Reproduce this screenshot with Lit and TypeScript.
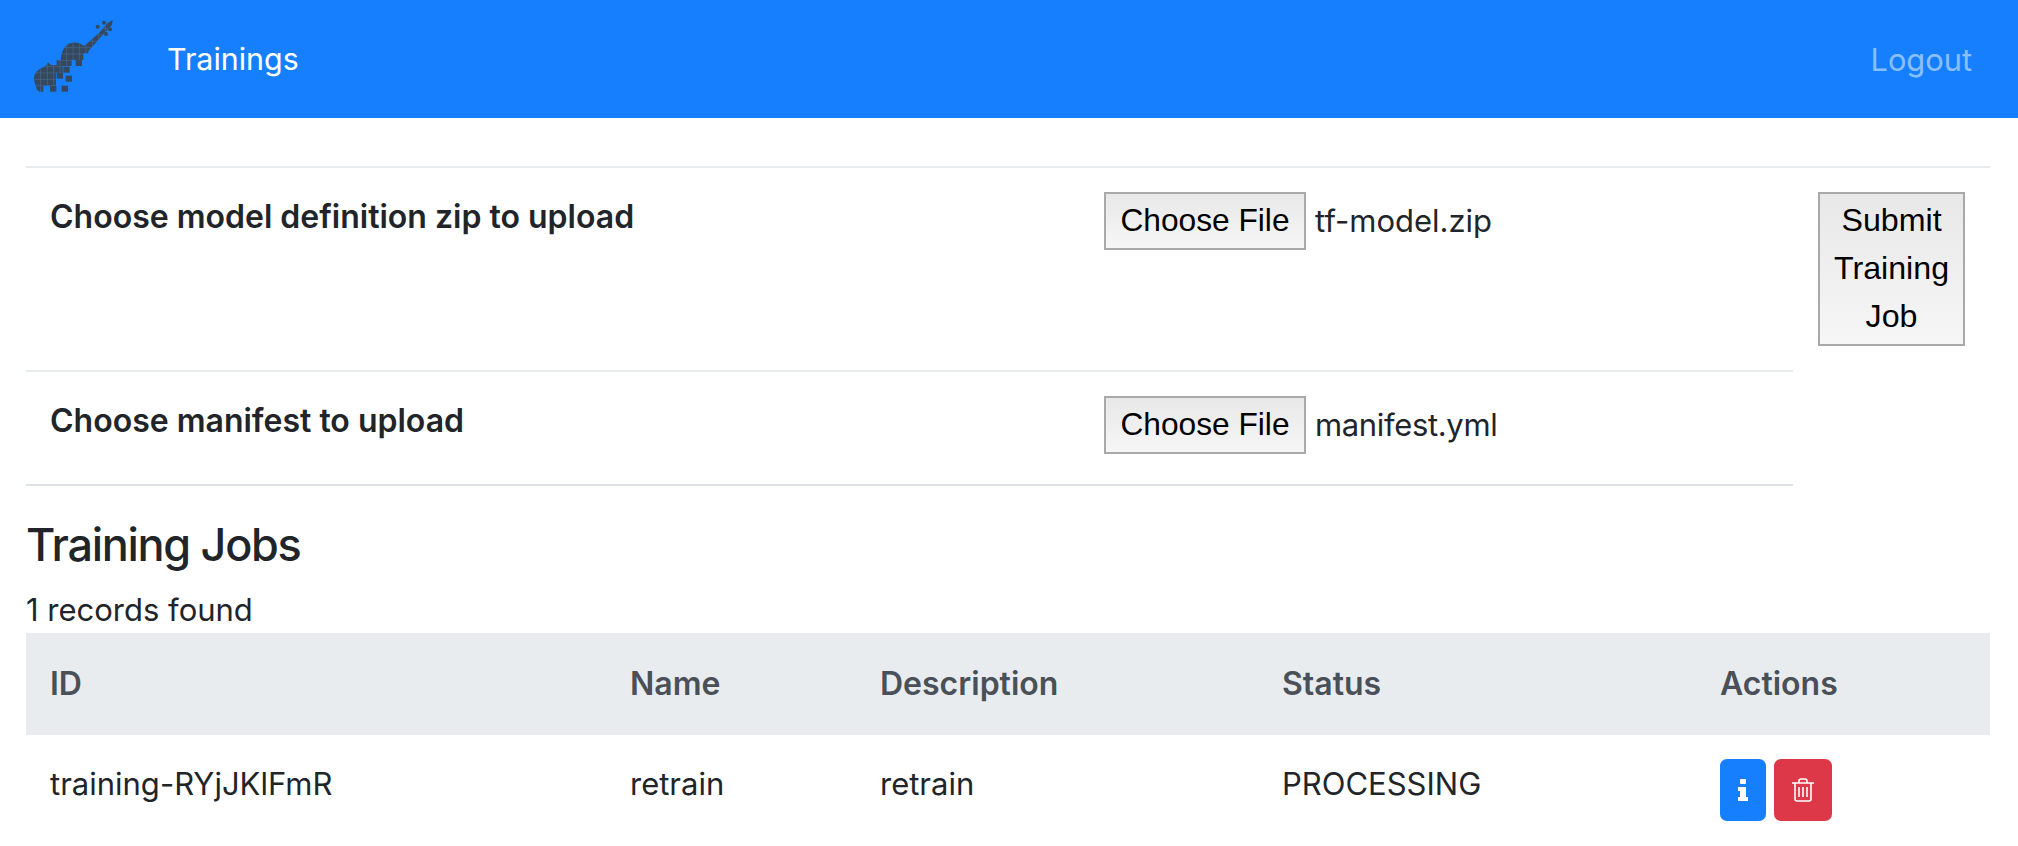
import { LitElement, html, svg, css } from "lit";
import { customElement } from "lit/decorators.js";

const looseSquares: [number, number][] = [
  [167, 150],
  [130, 170],
  [110, 188],
  [137, 197],
  [125, 227],
  [90, 227],
];

const pegs: [number, number][] = [
  [233, 50],
  [252, 38],
  [270, 58],
  [258, 72],
];

const gridX = [62, 82, 101, 120, 140, 159, 178, 198, 217, 236, 256];
const gridY = [55, 75, 94, 113, 132, 151, 170, 189, 208, 227];

const violinPath =
  "M42 205C42 190 52 178 78 167L84 157L92 165H110V150H122C124 130 130 108 150 100C165 94 180 98 192 108L238 68L262 40L278 30L276 44L245 78L205 124V130H190V150H155V168H128V188H108V227H70V245H58Q48 240 47 225Q42 215 42 205Z";

@customElement("app-root")
export class AppRoot extends LitElement {
  static styles = css`
    :host {
      display: block;
      font-family: Inter, "Liberation Sans", sans-serif;
      font-size: 31px;
      color: #212529;
      background: #fff;
      height: 846px;
      overflow: hidden;
    }
    .navbar {
      display: flex;
      align-items: center;
      height: 118px;
      background: #167ffe;
      padding: 0 46px 0 20px;
    }
    .logo {
      width: 110px;
      height: 90px;
      margin-right: 37px;
      margin-top: -8px;
    }
    .brand {
      color: #fff;
      font-size: 30.4px;
    }
    .logout {
      margin-left: auto;
      color: rgba(255, 255, 255, 0.5);
      font-size: 30.8px;
    }
    .content {
      padding: 48px 28px 0 26px;
    }
    .uploads {
      display: grid;
      grid-template-columns: 1053px 714px 197px;
      grid-template-rows: 204px 114px;
      border-top: 2px solid #e9ecef;
    }
    .cell {
      padding: 24px 25px 0;
      box-sizing: border-box;
      border-bottom: 2px solid #e9ecef;
    }
    .last {
      border-bottom-color: #dee2e6;
    }
    .label {
      padding: 26px 24px 0;
      font-weight: 600;
      font-size: 32px;
      line-height: 45px;
    }
    .file {
      display: flex;
      align-items: center;
      gap: 9px;
      font-size: 31px;
    }
    .file span {
      margin-bottom: 2px;
    }
    .file .manifest {
      letter-spacing: -0.35px;
    }
    .native {
      font-family: "Liberation Sans", Arial, sans-serif;
      font-size: 31.7px;
      color: #000;
      background: linear-gradient(#e8e8e8, #f6f6f6);
      border: 2px solid #a9a9a9;
      padding: 0 0 2px;
      line-height: 48px;
      box-sizing: border-box;
    }
    .choose {
      width: 202px;
      height: 58px;
    }
    .submit-cell {
      grid-column: 3;
      grid-row: 1 / span 2;
      padding: 24px 25px 0;
    }
    .submit {
      display: block;
      width: 147px;
      height: 154px;
      font-size: 32.2px;
    }
    h2 {
      margin: 32px 0 0;
      font-size: 45px;
      font-weight: 500;
      letter-spacing: -1.3px;
      line-height: 54px;
    }
    .count {
      margin-top: 15px;
      line-height: 46px;
      font-size: 31px;
    }
    table {
      width: 1964px;
      border-collapse: collapse;
      table-layout: fixed;
    }
    th {
      background: #e9ecef;
      color: #495057;
      font-weight: 600;
      text-align: left;
      height: 102px;
      padding: 0 24px 2px;
      box-sizing: border-box;
      font-size: 32px;
    }
    td {
      padding: 24px 24px 0;
      vertical-align: top;
      line-height: 50px;
      font-size: 31px;
    }
    .actions {
      display: flex;
      gap: 8px;
    }
    .btn {
      display: flex;
      align-items: center;
      justify-content: center;
      height: 62px;
      border: 0;
      padding: 0;
      border-radius: 7px;
      color: #fff;
    }
    .info {
      width: 46px;
      background: #167ffe;
    }
    .danger {
      width: 58px;
      background: #dc3848;
    }
  `;

  private logo() {
    return html`<svg class="logo" viewBox="0 0 330 270">
      <defs>
        <clipPath id="violin"><path d=${violinPath}></path></clipPath>
      </defs>
      <g fill="#34495e">
        <path d=${violinPath}></path>
        ${pegs.map(([x, y]) => svg`<circle cx=${x} cy=${y} r="6"></circle>`)}
        ${looseSquares.map(
          ([x, y]) => svg`<rect x=${x} y=${y} width="19" height="18"></rect>`
        )}
      </g>
      <g clip-path="url(#violin)" stroke="#4d6f97" stroke-width="1.6">
        ${gridX.map((x) => svg`<line x1=${x} x2=${x} y1="20" y2="250"></line>`)}
        ${gridY.map((y) => svg`<line x1="40" x2="280" y1=${y} y2=${y}></line>`)}
      </g>
    </svg>`;
  }

  render() {
    return html`
      <nav class="navbar">
        ${this.logo()}
        <span class="brand">Trainings</span>
        <span class="logout">Logout</span>
      </nav>
      <main class="content">
        <div class="uploads">
          <div class="cell label">Choose model definition zip to upload</div>
          <div class="cell">
            <div class="file">
              <button class="native choose">Choose File</button>
              <span>tf-model.zip</span>
            </div>
          </div>
          <div class="submit-cell">
            <button class="native submit">Submit Training Job</button>
          </div>
          <div class="cell last label">Choose manifest to upload</div>
          <div class="cell last">
            <div class="file">
              <button class="native choose">Choose File</button>
              <span class="manifest">manifest.yml</span>
            </div>
          </div>
        </div>
        <h2>Training Jobs</h2>
        <div class="count">1 records found</div>
        <table>
          <colgroup>
            <col style="width:580px" />
            <col style="width:250px" />
            <col style="width:402px" />
            <col style="width:438px" />
            <col />
          </colgroup>
          <thead>
            <tr>
              <th>ID</th>
              <th>Name</th>
              <th>Description</th>
              <th>Status</th>
              <th>Actions</th>
            </tr>
          </thead>
          <tbody>
            <tr>
              <td>training-RYjJKlFmR</td>
              <td>retrain</td>
              <td>retrain</td>
              <td>PROCESSING</td>
              <td>
                <div class="actions">
                  <button class="btn info">
                    <svg width="10" height="22" viewBox="0 0 10 22" fill="#fff">
                      <rect x="2" y="0" width="6" height="5" rx="1"></rect>
                      <path d="M0 8h8v10h2v4H0v-4h2v-6H0z"></path>
                    </svg>
                  </button>
                  <button class="btn danger">
                    <svg width="22" height="24" viewBox="0 0 22 24" fill="none" stroke="#fff" stroke-width="1.6">
                      <path d="M0 5h22M7 5V3a2 2 0 0 1 2-2h4a2 2 0 0 1 2 2v2"></path>
                      <path d="M3 5v16a2 2 0 0 0 2 2h12a2 2 0 0 0 2-2V5"></path>
                      <path d="M7 9v10M11 9v10M15 9v10"></path>
                    </svg>
                  </button>
                </div>
              </td>
            </tr>
          </tbody>
        </table>
      </main>
    `;
  }
}
